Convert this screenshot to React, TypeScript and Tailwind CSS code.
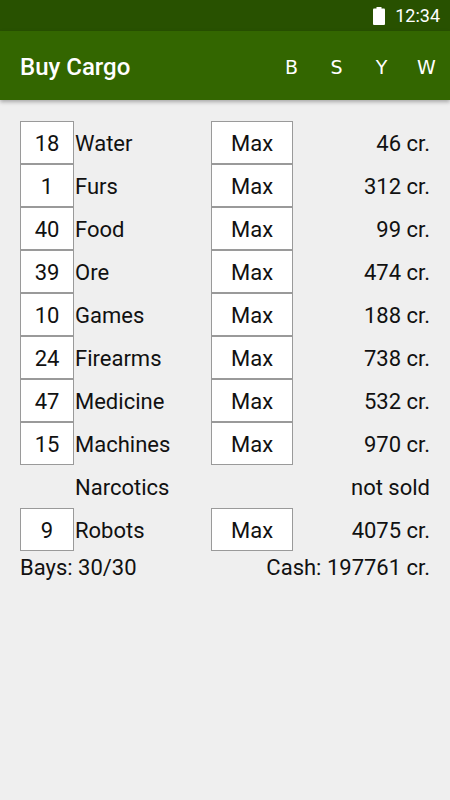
const goods: { qty: string | null; name: string; price: string }[] = [
  { qty: '18', name: 'Water', price: '46 cr.' },
  { qty: '1', name: 'Furs', price: '312 cr.' },
  { qty: '40', name: 'Food', price: '99 cr.' },
  { qty: '39', name: 'Ore', price: '474 cr.' },
  { qty: '10', name: 'Games', price: '188 cr.' },
  { qty: '24', name: 'Firearms', price: '738 cr.' },
  { qty: '47', name: 'Medicine', price: '532 cr.' },
  { qty: '15', name: 'Machines', price: '970 cr.' },
  { qty: null, name: 'Narcotics', price: 'not sold' },
  { qty: '9', name: 'Robots', price: '4075 cr.' },
];

function StatusBar() {
  return (
    <div className="h-[31px] bg-[#285100] flex items-center justify-end pr-[10px] gap-[10px]">
      <svg width="12" height="18" viewBox="0 0 12 18">
        <rect x="3.5" y="0" width="5" height="2" fill="#fff" />
        <rect x="0" y="1.5" width="12" height="16.5" rx="1" fill="#fff" />
      </svg>
      <span className="text-white text-[18px]">12:34</span>
    </div>
  );
}

function AppBar() {
  return (
    <div className="h-[69px] bg-[#336600] flex items-center pl-[20px] pt-[3px] shadow-[0_2px_4px_rgba(0,0,0,0.3)] relative">
      <span className="text-white text-[24px] font-medium flex-1">Buy Cargo</span>
      <div className="flex text-white text-[19px] font-['DejaVu_Sans',sans-serif] pr-[1px]">
        {['B', 'S', 'Y', 'W'].map((l) => (
          <span key={l} className="w-[45px] text-center">{l}</span>
        ))}
      </div>
    </div>
  );
}

function Box({ children, width }: { children: string; width: string }) {
  return (
    <div className={`${width} h-[43px] border border-[#9a9a9a] bg-white flex items-center justify-center pt-[2px]`}>
      {children}
    </div>
  );
}

export default function App() {
  return (
    <div className="w-[450px] h-[800px] bg-[#efefef] font-['Roboto',sans-serif] text-[#111] overflow-hidden">
      <StatusBar />
      <AppBar />
      <div className="px-[20px] pt-[21px] text-[22px]">
        {goods.map((g) => (
          <div key={g.name} className="grid grid-cols-[54px_137px_82px_1fr] h-[43px] items-center">
            {g.qty ? <Box width="w-[54px]">{g.qty}</Box> : <div />}
            <span className="pl-[1px] pt-[2px]">{g.name}</span>
            {g.qty ? <Box width="w-[82px]">Max</Box> : <div />}
            <span className="text-right pt-[2px]">{g.price}</span>
          </div>
        ))}
        <div className="flex justify-between h-[31px] items-center pt-[2px]">
          <span>Bays: 30/30</span>
          <span>Cash: 197761 cr.</span>
        </div>
      </div>
    </div>
  );
}
